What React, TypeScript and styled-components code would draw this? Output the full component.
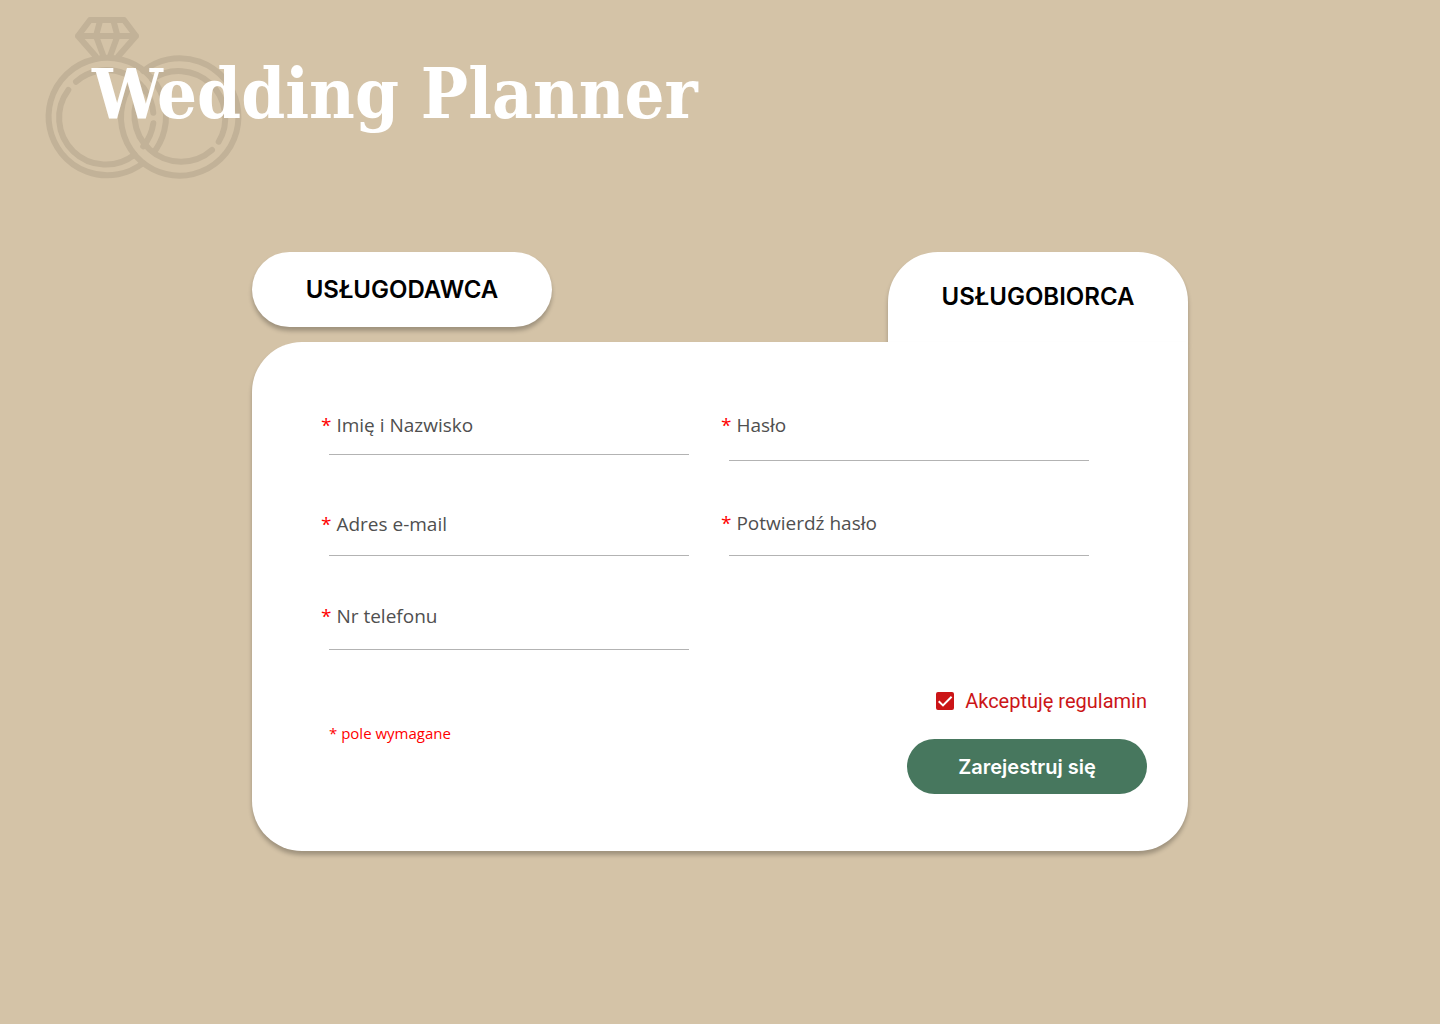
import React from "react";
import styled, { createGlobalStyle } from "styled-components";

const GlobalStyle = createGlobalStyle`
  *, *::before, *::after { box-sizing: border-box; }
  body { margin: 0; background: #d4c3a7; }
  button, input { font: inherit; }
`;

const Page = styled.div`
  min-height: 100vh;
  padding-bottom: 48px;
  font-family: "Open Sans", "Noto Sans", sans-serif;
`;

const Header = styled.header`
  display: grid;
  align-items: start;
  padding: 12px 40px 68px;
`;

const Logo = styled.svg`
  grid-area: 1 / 1;
  width: 208px;
  height: 172px;
`;

const Title = styled.h1`
  grid-area: 1 / 1;
  margin: 0;
  padding: 40px 0 0 52px;
  color: #fff;
  font-family: "DejaVu Serif Condensed", "DejaVu Serif", serif;
  font-weight: 700;
  font-size: 70px;
  line-height: 84px;
  white-space: nowrap;
`;

const Main = styled.main`
  width: 65%;
  min-width: 880px;
  margin: 0 auto;
`;

const Tabs = styled.div`
  display: flex;
  justify-content: space-between;
  align-items: flex-start;
`;

const Tab = styled.button<{ $active?: boolean }>`
  width: 300px;
  height: ${(p) => (p.$active ? 90 : 75)}px;
  border: 0;
  border-radius: ${(p) => (p.$active ? "50px 50px 0 0" : "38px")};
  background: #fff;
  color: #000;
  box-shadow: 0 4px 4px rgba(0, 0, 0, 0.25);
  font-family: Inter, sans-serif;
  font-weight: 600;
  font-size: 24px;
  line-height: 36px;
`;

const Card = styled.form`
  position: relative;
  padding: 68px 41px 57px 69px;
  border-radius: 50px 0 50px 50px;
  background: #fff;
  box-shadow: 0 4px 4px rgba(0, 0, 0, 0.25);
`;

const Fields = styled.div`
  display: grid;
  grid-template-columns: 1fr 1fr;
  column-gap: 32px;
  padding-right: 58px;
`;

const Column = styled.div`
  display: flex;
  flex-direction: column;
`;

const Field = styled.div<{ $height: number }>`
  display: flex;
  flex-direction: column;
  height: ${(p) => p.$height}px;
`;

const Label = styled.label`
  color: #4f4f4f;
  font-size: 19px;
  line-height: 30px;
`;

const Star = styled.span`
  color: #f00;
`;

const Input = styled.input<{ $height: number }>`
  height: ${(p) => p.$height}px;
  margin-left: 8px;
  padding: 0;
  border: 0;
  border-bottom: 1px solid #b3b3b3;
  background: transparent;
  outline: none;
`;

const Footer = styled.div`
  display: flex;
  justify-content: space-between;
  align-items: flex-start;
`;

const Note = styled.p`
  margin: 32px 0 0 8px;
  color: #f00;
  font-size: 15px;
  line-height: 24px;
`;

const Actions = styled.div`
  display: flex;
  flex-direction: column;
  align-items: flex-end;
  gap: 26px;
`;

const Terms = styled.label`
  display: flex;
  align-items: center;
  gap: 11px;
  color: #cb1517;
  font-family: Roboto, sans-serif;
  font-size: 20px;
  line-height: 24px;
`;

const Tick = styled.span`
  display: grid;
  width: 18px;
  height: 18px;

  > * { grid-area: 1 / 1; }
  svg { pointer-events: none; visibility: hidden; z-index: 1; }
  input:checked + svg { visibility: visible; }
`;

const Checkbox = styled.input`
  appearance: none;
  width: 18px;
  height: 18px;
  margin: 0;
  border: 2px solid #cb1517;
  border-radius: 2px;
  &:checked { background: #cb1517; }
`;

const Submit = styled.button`
  width: 240px;
  height: 55px;
  border: 0;
  border-radius: 28px;
  background: #47775e;
  color: #fff;
  font-family: Inter, sans-serif;
  font-weight: 600;
  font-size: 20px;
  line-height: 30px;
`;

type FieldSpec = { id: string; label: string; type: string; input: number; height: number };

const personal: FieldSpec[] = [
  { id: "name", label: "Imię i Nazwisko", type: "text", input: 15, height: 99 },
  { id: "email", label: "Adres e-mail", type: "email", input: 17, height: 92 },
  { id: "phone", label: "Nr telefonu", type: "tel", input: 19, height: 88 },
];

const passwords: FieldSpec[] = [
  { id: "password", label: "Hasło", type: "password", input: 21, height: 98 },
  { id: "confirm", label: "Potwierdź hasło", type: "password", input: 18, height: 92 },
];

function FieldColumn({ fields }: { fields: FieldSpec[] }) {
  return (
    <Column>
      {fields.map((f) => (
        <Field key={f.id} $height={f.height}>
          <Label htmlFor={f.id}>
            <Star>*</Star> {f.label}
          </Label>
          <Input id={f.id} type={f.type} $height={f.input} required />
        </Field>
      ))}
    </Column>
  );
}

function Rings() {
  return (
    <Logo viewBox="40 12 208 172" fill="none" stroke="#c2b298" strokeWidth="6" strokeLinecap="round" strokeLinejoin="round" aria-hidden="true">
      {/* diamond */}
      <path d="M95.5 56 78 36 90 20h34l12 16-17.500 20M78 36h58M100 21l-4 15 7 19M113.500 21l4 15-7 19" />
      {/* left ring: outer band, then inner band with its two highlights */}
      <path d="M152 154.600A58.700 58.700 0 1 0 143.200 163" strokeLinecap="butt" />
      <path d="M76 81.700A46.700 46.700 0 0 1 153.300 112.700M153.300 123.300A46.700 46.700 0 0 1 143.200 146.300M134.600 154.600A46.700 46.700 0 0 1 68.300 90" />
      {/* right ring, woven through the left one */}
      <path d="M143.200 71A58.700 58.700 0 1 1 134.600 79.400" />
      <path d="M152 79.400A46.700 46.700 0 0 1 218.700 141.700M212 150A46.700 46.700 0 0 1 143.200 87.700" />
    </Logo>
  );
}

export default function App() {
  return (
    <Page>
      <GlobalStyle />
      <Header>
        <Rings />
        <Title>Wedding Planner</Title>
      </Header>
      <Main>
        <Tabs>
          <Tab type="button">USŁUGODAWCA</Tab>
          <Tab type="button" $active>USŁUGOBIORCA</Tab>
        </Tabs>
        <Card onSubmit={(e) => e.preventDefault()}>
          <Fields>
            <FieldColumn fields={personal} />
            <FieldColumn fields={passwords} />
          </Fields>
          <Footer>
            <Note>* pole wymagane</Note>
            <Actions>
              <Terms>
                <Tick>
                  <Checkbox type="checkbox" defaultChecked />
                  <svg viewBox="0 0 18 18" fill="none" stroke="#fff" strokeWidth="2">
                    <path d="M2.7 9.2 7 13.4 15.6 4.8" />
                  </svg>
                </Tick>
                Akceptuję regulamin
              </Terms>
              <Submit type="submit">Zarejestruj się</Submit>
            </Actions>
          </Footer>
        </Card>
      </Main>
    </Page>
  );
}
